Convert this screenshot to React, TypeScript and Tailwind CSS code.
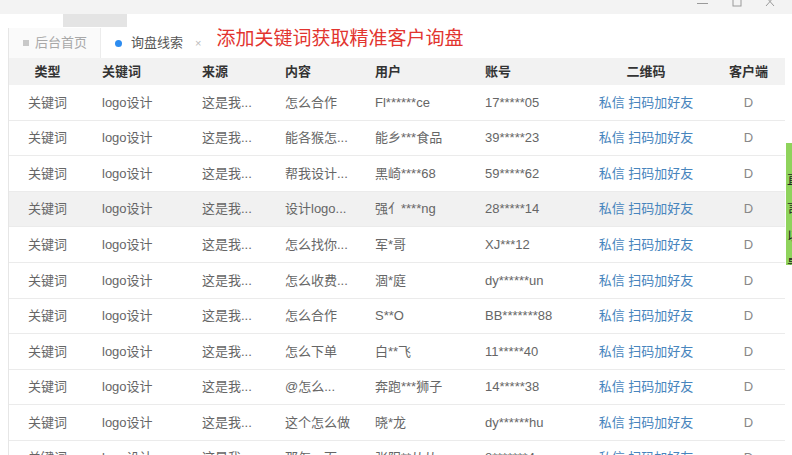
import React from "react";

type Row = {
  type: string;
  keyword: string;
  source: string;
  content: string;
  user: string;
  account: string;
};

const rows: Row[] = [
  { type: "关键词", keyword: "logo设计", source: "这是我...", content: "怎么合作", user: "Fl******ce", account: "17*****05" },
  { type: "关键词", keyword: "logo设计", source: "这是我...", content: "能各猴怎...", user: "能乡***食品", account: "39*****23" },
  { type: "关键词", keyword: "logo设计", source: "这是我...", content: "帮我设计...", user: "黑崎****68", account: "59*****62" },
  { type: "关键词", keyword: "logo设计", source: "这是我...", content: "设计logo...", user: "强亻****ng", account: "28*****14" },
  { type: "关键词", keyword: "logo设计", source: "这是我...", content: "怎么找你...", user: "军*哥", account: "XJ***12" },
  { type: "关键词", keyword: "logo设计", source: "这是我...", content: "怎么收费...", user: "涸*庭", account: "dy******un" },
  { type: "关键词", keyword: "logo设计", source: "这是我...", content: "怎么合作", user: "S**O", account: "BB*******88" },
  { type: "关键词", keyword: "logo设计", source: "这是我...", content: "怎么下单", user: "白**飞", account: "11*****40" },
  { type: "关键词", keyword: "logo设计", source: "这是我...", content: "@怎么...", user: "奔跑***狮子", account: "14*****38" },
  { type: "关键词", keyword: "logo设计", source: "这是我...", content: "这个怎么做", user: "晓*龙", account: "dy******hu" },
  { type: "关键词", keyword: "logo设计", source: "这是我...", content: "那怎一面", user: "张阳**从从", account: "8*******4" },
];

const cols = "grid grid-cols-[77px_100px_83px_90px_110px_112px_130px_75px]";

export default function App() {
  return (
    <div
      className="relative w-[792px] h-[455px] overflow-hidden bg-white"
      style={{ fontFamily: '"Liberation Sans", "Noto Sans CJK SC", sans-serif' }}
    >
      {/* window title bar */}
      <div className="h-[14px] bg-[#f3f3f3] flex justify-end items-start pr-[14px] gap-[20px]">
        <svg width="14" height="8" viewBox="0 0 14 8">
          <line x1="1" y1="3.5" x2="12" y2="3.5" stroke="#9a9a9a" strokeWidth="1" />
        </svg>
        <svg width="14" height="8" viewBox="0 0 14 8">
          <rect x="3" y="-3" width="8" height="9" fill="none" stroke="#9a9a9a" strokeWidth="1" />
        </svg>
        <svg width="14" height="8" viewBox="0 0 14 8">
          <line x1="2" y1="-3" x2="10" y2="6" stroke="#9a9a9a" strokeWidth="1" />
          <line x1="10" y1="-3" x2="2" y2="6" stroke="#9a9a9a" strokeWidth="1" />
        </svg>
      </div>

      {/* blurred strip */}
      <div className="h-[14px] pl-[63px]">
        <div className="w-[64px] h-[13px] bg-[#e4e4e4]" />
      </div>

      {/* tabs */}
      <div className="h-[30px] flex items-center ml-[8px] border-l border-[#e6e6e6]">
        <div className="w-[92px] h-full flex items-center pl-[14px] gap-[6px] bg-[#fafafa] border-r border-[#ececec]">
          <span className="w-[6px] h-[6px] bg-[#c8c8c8]" />
          <span className="text-[13px] text-[#a8a8a8]">后台首页</span>
        </div>
        <div className="h-full flex items-center pl-[14px] pr-[10px] gap-[9px]">
          <span className="w-[7px] h-[7px] rounded-full bg-[#2d8cf0]" />
          <span className="text-[13px] text-[#555]">询盘线索</span>
          <span className="text-[11px] text-[#bbb] ml-[3px]">×</span>
        </div>
        <div className="text-[19px] text-[#e2342f] ml-[5px] -mt-[8px]">添加关键词获取精准客户询盘</div>
      </div>

      {/* table */}
      <div className="ml-[8px] w-[777px] border-l border-[#e6e6e6]">
        <div className={`${cols} h-[27px] items-center bg-[#f2f2f2] text-[13px] text-[#333] font-semibold`}>
          <div className="text-center">类型</div>
          <div className="pl-4">关键词</div>
          <div className="pl-4">来源</div>
          <div className="pl-4">内容</div>
          <div className="pl-4">用户</div>
          <div className="pl-4">账号</div>
          <div className="text-center">二维码</div>
          <div className="text-center">客户端</div>
        </div>
        {rows.map((r, i) => (
          <div
            key={i}
            className={`${cols} h-[35.6px] items-center border-b border-[#ebebeb] text-[13px] text-[#666] ${
              i === 3 ? "bg-[#f1f1f1]" : "bg-white"
            }`}
          >
            <div className="text-center">{r.type}</div>
            <div className="pl-4">{r.keyword}</div>
            <div className="pl-4">{r.source}</div>
            <div className="pl-4">{r.content}</div>
            <div className="pl-4">{r.user}</div>
            <div className="pl-4">{r.account}</div>
            <div className="text-center text-[#4785bd]">私信 扫码加好友</div>
            <div className="text-center text-[#888]">D</div>
          </div>
        ))}
      </div>

      {/* green side strip */}
      <div className="absolute right-0 top-[143px] w-[6px] h-[122px] bg-[#8fd35c] overflow-hidden">
        <div className="flex flex-col text-[13px] leading-[14px] text-[#222] pl-[1px] pt-[30px] gap-[14px]">
          <span>直</span>
          <span>言</span>
          <span>以</span>
          <span>是</span>
        </div>
      </div>
    </div>
  );
}
